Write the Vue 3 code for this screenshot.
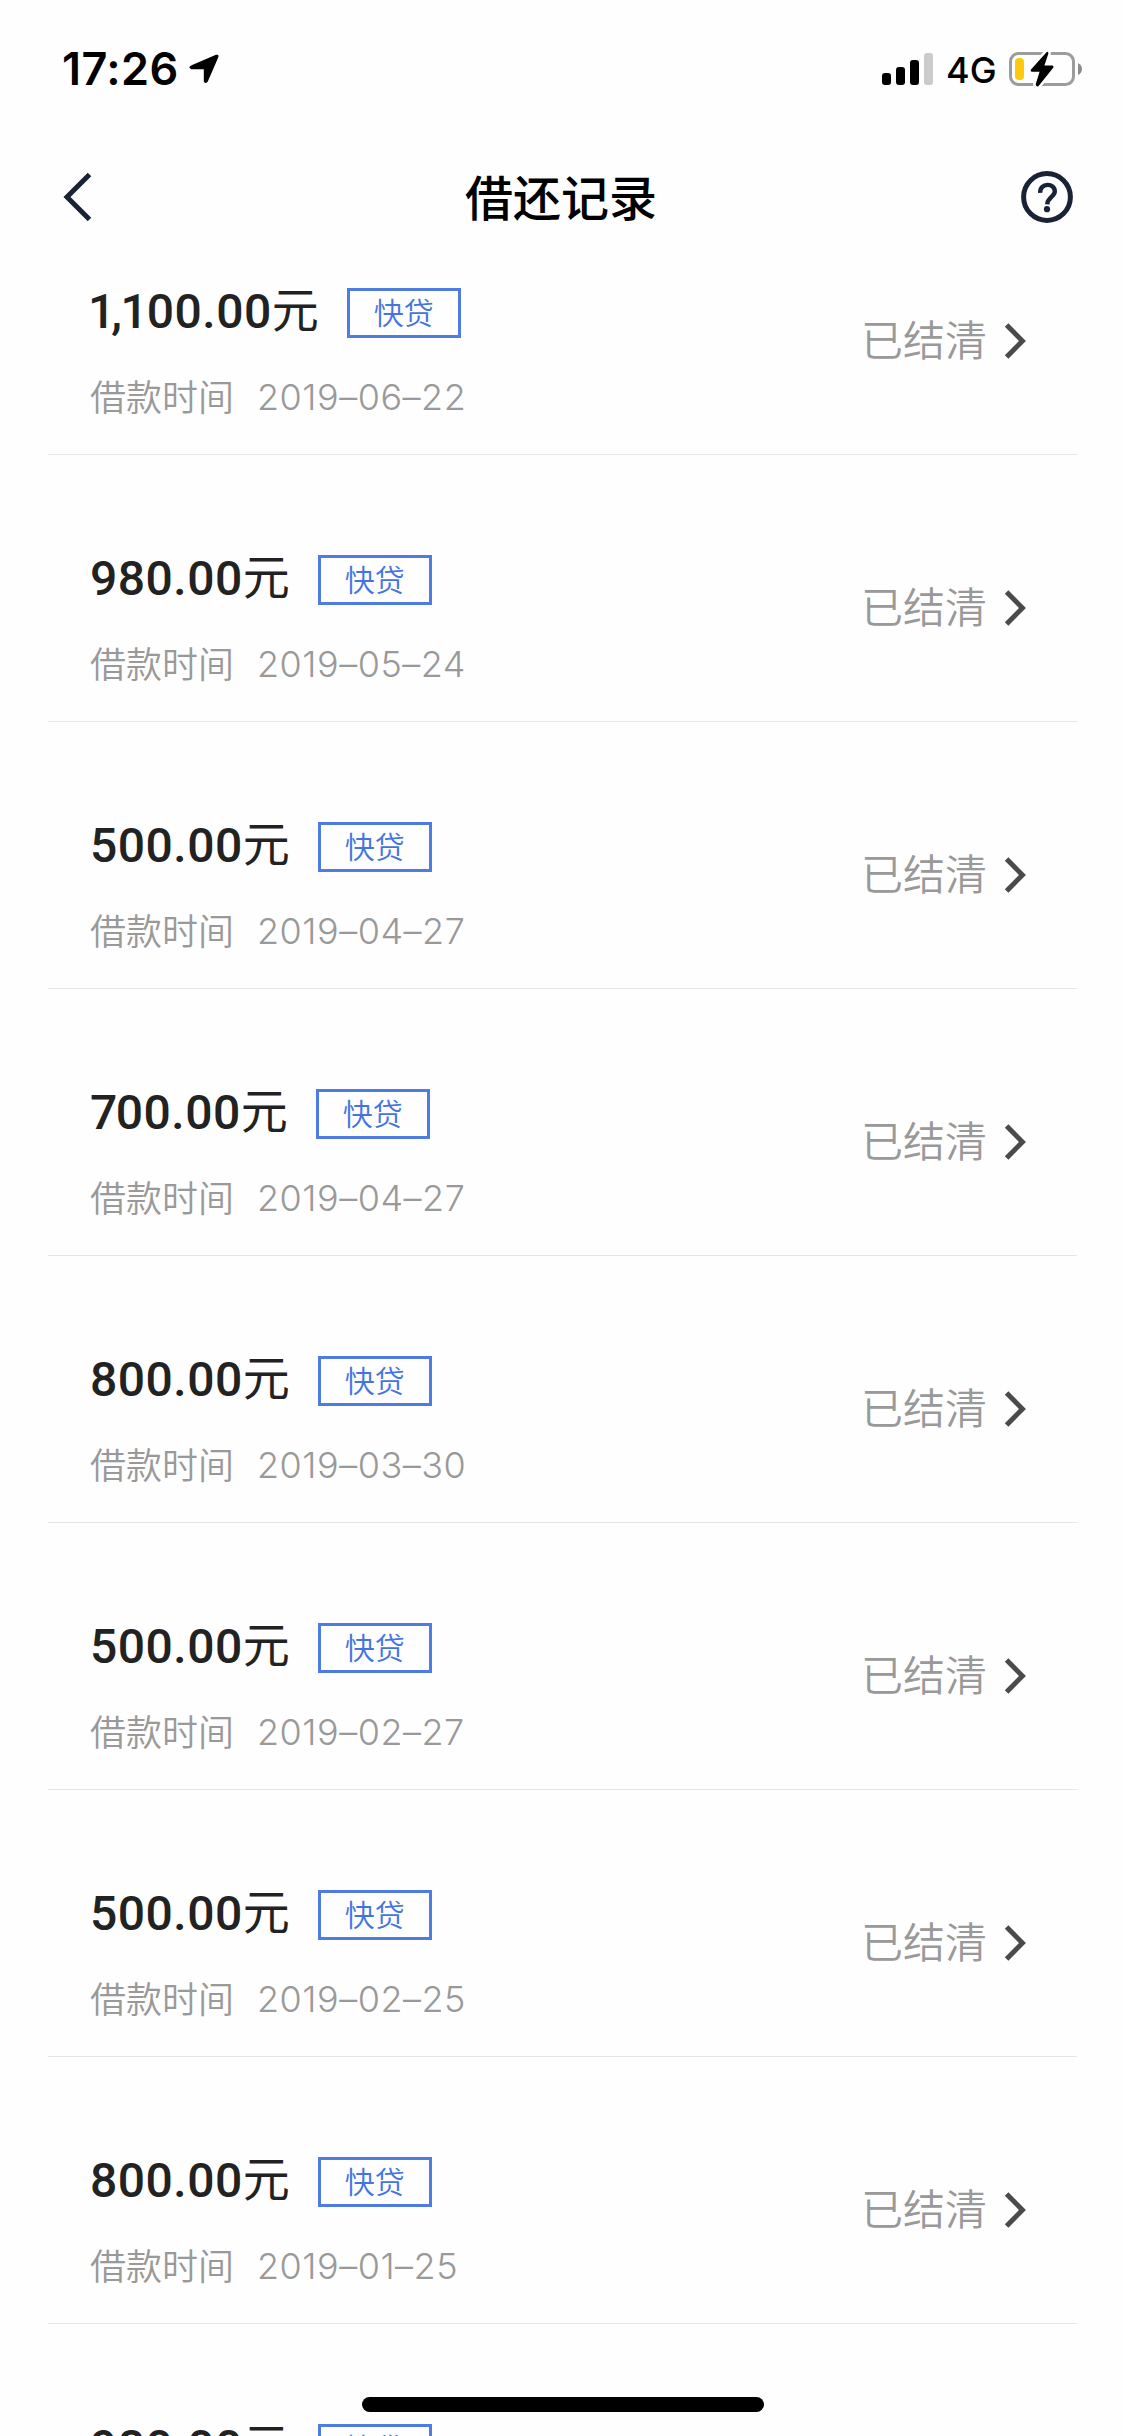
<template>
  <div class="page">
    <header class="status-bar">
      <div class="status-left">
        <span class="time">17:26</span>
        <svg class="location" viewBox="0 0 30 30">
          <path d="M2 11.5 L27 .8 Q30.4 0 29.2 3.4 L18.8 27.6 Q16.8 30.6 14.8 27.4 V15.2 H2.4 Q-1.4 13.6 2 11.5 Z" fill="#000" />
        </svg>
      </div>
      <div class="status-right">
        <svg class="signal" viewBox="0 0 52 32">
          <rect x="0" y="20" width="9" height="12" rx="3" />
          <rect x="14" y="14" width="9" height="18" rx="3" />
          <rect x="28" y="7" width="9" height="25" rx="3" />
          <rect x="42" y="0" width="9" height="32" rx="3" fill="#cbcbcb" />
        </svg>
        <span class="network">4G</span>
        <svg class="battery" viewBox="0 0 74 38">
          <rect x="1.5" y="3.5" width="63" height="31" rx="8" fill="none" stroke="#9c9c9c" stroke-width="3" />
          <rect x="6" y="8" width="9" height="22" rx="4" fill="#fdca0b" />
          <path d="M69 13 Q73 15 73 19 Q73 23 69 25 Z" fill="#8c8c8c" />
          <path
            d="M37.5 2.2 L22 19.6 Q21 21.6 23 21.8 H30.6 L26.6 34.6 Q28 38 30 35.4 L44.4 17.6 Q45 15.8 43 15.6 H35.4 L39.4 3.4 Q39.4 1 37.5 2.2 Z"
            stroke="#fefefe"
            stroke-width="5"
            paint-order="stroke"
          />
        </svg>
      </div>
    </header>

    <nav class="nav-bar">
      <svg class="back" viewBox="0 0 30 52">
        <path d="M27.5 3.5 L5 26 L27.5 48.5" />
      </svg>
      <h1 class="title">借还记录</h1>
      <svg class="help" viewBox="0 0 52 52">
        <circle cx="26" cy="26" r="23.4" />
        <path d="M19.2 21.8 C18.8 11.4 34 11.6 33.8 20.6 C33.6 25.6 26.4 26.4 26.2 33.4" />
        <circle class="dot" cx="26" cy="38.2" r="3.1" />
      </svg>
    </nav>

    <main class="list">
      <div class="list-inner">
        <div v-for="(item, i) in records" :key="i" class="record">
          <div class="info">
            <div class="amount-line">
              <span class="amount"><span v-for="(ch, n) in item.amount" :key="n" :class="charClass(ch)">{{ ch }}</span></span>
              <span class="unit">元</span>
              <span class="tag">快贷</span>
            </div>
            <div class="date-line">
              <span class="label">借款时间</span>
              <span class="date">{{ item.date }}</span>
            </div>
          </div>
          <div class="state">
            <span class="state-text">已结清</span>
            <svg class="arrow" viewBox="0 0 22 38">
              <path d="M2.6 3 L18.4 19 L2.6 35" />
            </svg>
          </div>
        </div>
      </div>
    </main>

    <div class="home-indicator" />
  </div>
</template>

<script setup>
const records = [
  { amount: '1,100.00', date: '2019–06–22' },
  { amount: '980.00', date: '2019–05–24' },
  { amount: '500.00', date: '2019–04–27' },
  { amount: '700.00', date: '2019–04–27' },
  { amount: '800.00', date: '2019–03–30' },
  { amount: '500.00', date: '2019–02–27' },
  { amount: '500.00', date: '2019–02–25' },
  { amount: '800.00', date: '2019–01–25' },
  { amount: '980.00', date: '2018–12–27' },
]

// 数字间距微调
const charClass = (ch) => ({ one: ch === '1', comma: ch === ',', seven: ch === '7' })
</script>

<style>
body {
  margin: 0;
  background: #fefefe;
}
</style>

<style scoped>
.page {
  position: relative;
  display: flex;
  flex-direction: column;
  width: 1125px;
  height: 2436px;
  overflow: hidden;
  background: #fefefe;
  font-family: Inter, "Noto Sans CJK SC", sans-serif;
}

.status-bar {
  display: flex;
  flex: none;
  align-items: center;
  justify-content: space-between;
  box-sizing: border-box;
  height: 138px;
  padding: 0 42px 0 62px;
}

.status-left,
.status-right {
  display: flex;
  align-items: center;
}

.time {
  width: 127px;
  font-size: 45px;
  font-weight: 600;
  line-height: 54px;
  letter-spacing: 0.4px;
  white-space: nowrap;
}

.location {
  width: 30px;
  height: 30px;
}

.signal {
  width: 52px;
  height: 32px;
}

.network {
  width: 63px;
  margin-left: 12px;
  font-size: 36px;
  font-weight: 450;
  line-height: 42px;
  padding-top: 1px;
}

.battery {
  width: 74px;
  height: 38px;
}

.nav-bar {
  display: flex;
  flex: none;
  align-items: center;
  justify-content: space-between;
  box-sizing: border-box;
  height: 118px;
  padding: 0 52px 0 62px;
}

.back {
  width: 30px;
  height: 52px;
}

.back path {
  fill: none;
  stroke: #1a2236;
  stroke-width: 5;
}

.title {
  margin: 0;
  padding-top: 4px;
  padding-left: 9px;
  font-size: 48px;
  font-weight: 500;
  line-height: 72px;
  color: #000;
}

.help {
  width: 52px;
  height: 52px;
  fill: none;
  stroke: #1a2236;
  stroke-width: 5;
}

.help path {
  stroke-width: 4.4;
}

.help .dot {
  fill: #1a2236;
  stroke: none;
}

.list {
  flex: 1;
  min-height: 0;
  overflow: hidden;
}

.list-inner {
  margin-top: -68px;
}

.record {
  display: flex;
  justify-content: space-between;
  box-sizing: border-box;
  height: 267px;
  margin: 0 48px;
  padding: 100px 51px 0 42px;
  border-bottom: 1px solid #e5e5e5;
}

.amount-line {
  display: flex;
  align-items: center;
  height: 50px;
}

.amount {
  padding-bottom: 2px;
  font-family: Roboto, sans-serif;
  font-size: 48px;
  font-weight: 500;
  line-height: 50px;
  letter-spacing: 0.5px;
  color: #222;
}

.amount .one {
  margin-left: -2px;
  margin-right: -1.5px;
}

.amount .comma {
  margin-left: -3px;
}

.amount .seven {
  margin-right: -2px;
}

.unit {
  padding-bottom: 6px;
  font-size: 47px;
  line-height: 46px;
  color: #222;
}

.tag {
  box-sizing: border-box;
  width: 114px;
  height: 50px;
  margin-left: 28px;
  border: 3px solid #4f7ce3;
  font-size: 30px;
  font-weight: 350;
  line-height: 44px;
  text-align: center;
  color: #4474e2;
}

.date-line {
  display: flex;
  align-items: center;
  height: 44px;
  margin-top: 38px;
  font-size: 36px;
  font-weight: 350;
  line-height: 44px;
  color: #999;
}

.date {
  margin-left: 23px;
  padding-bottom: 2px;
  font-weight: 340;
  letter-spacing: 0.5px;
}

.state {
  display: flex;
  align-items: center;
  height: 60px;
  margin-top: 23px;
  font-size: 42px;
  font-weight: 350;
  color: #999;
}

.state-text {
  padding-bottom: 7px;
}

.arrow {
  width: 22px;
  height: 38px;
  margin-left: 17px;
}

.arrow path {
  fill: none;
  stroke: #4a4a4a;
  stroke-width: 5;
}

.home-indicator {
  position: absolute;
  bottom: 24px;
  left: 362px;
  width: 402px;
  height: 15px;
  border-radius: 8px;
  background: #000;
}
</style>
